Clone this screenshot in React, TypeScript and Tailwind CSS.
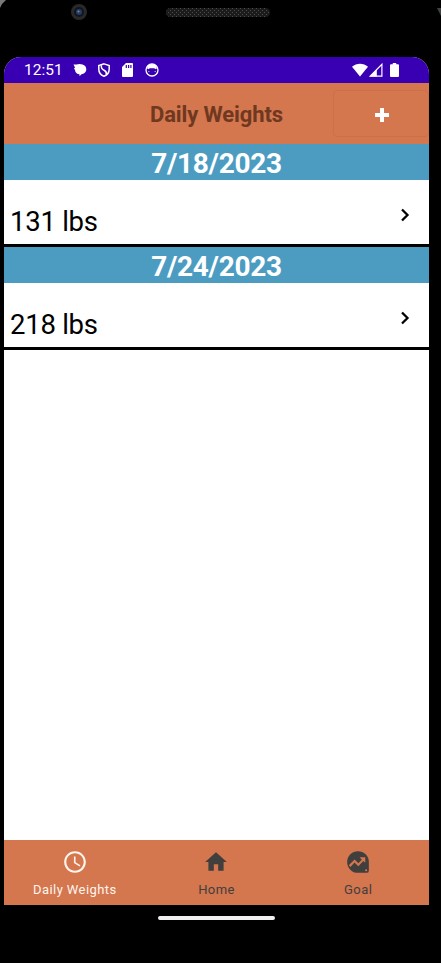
import React from "react";

const entries = [
  { date: "7/18/2023", weight: "131 lbs" },
  { date: "7/24/2023", weight: "218 lbs" },
];

function StatusBar() {
  return (
    <div className="flex h-[26px] shrink-0 items-center bg-[#3900b3] pl-5 pr-[30px] text-white">
      <span className="w-[49px] pt-[1px] text-[15.5px] leading-[25px]">12:51</span>
      <svg className="h-[14px] w-[14px]" viewBox="0 0 14 14" fill="currentColor">
        <path d="M.5 1.500H3.500C5 .8 8 .8 9.500 1.500 12 2.300 13.300 4 13.300 6.300 13.300 9 11 11 8.500 11.200L6.500 13.300V11.200C4 11.200 2.200 9.500 2 7L1 5.500 2 4.500Z" />
      </svg>
      <svg className="ml-[10px] h-[14px] w-[14px]" viewBox="0 0 14 14" fill="none" stroke="currentColor" strokeWidth="1.500">
        <path d="M7 .9 12.200 2.500V6C12.200 9.800 9.800 12.300 7 13.300 4.200 12.300 1.800 9.800 1.800 6V2.500Z" />
        <path d="M4.500 2.200C3.500 5.500 5.500 6.500 7.500 7.500 9.500 8.600 9.700 9.800 9.200 11.800" />
      </svg>
      <svg className="ml-[10px] h-[14px] w-[14px]" viewBox="0 0 14 14" fill="currentColor" fillRule="evenodd">
        <path d="M5 0H11A1 1 0 0 1 12 1V13A1 1 0 0 1 11 14H2A1 1 0 0 1 1 13V4ZM4.700 2V5H5.900V2ZM7 2V5H8.200V2ZM9.300 2V5H10.500V2Z" />
      </svg>
      <svg className="ml-[10px] h-[14px] w-[14px]" viewBox="0 0 14 14">
        <circle cx="7" cy="7" r="6" fill="none" stroke="currentColor" strokeWidth="1.300" />
        <path d="M1.500 7 3 2.200 5 1.200H9L11 2.200 12.500 7 11.300 5.300 10.500 6.200 9.300 5.200H4.700L3.500 6.200 2.700 5.300ZM3 8.500 4 7.800 4.500 9ZM11 8.500 10 7.800 9.500 9Z" fill="currentColor" />
      </svg>
      <div className="ml-auto flex items-center">
        <svg className="h-[14px] w-4" viewBox="0 0 16 14" fill="currentColor">
          <path d="M0 3.700C4.500-.2 11.500-.2 16 3.700L8 13.500Z" />
        </svg>
        <svg className="ml-[1px] h-[14px] w-[14px]" viewBox="0 0 14 14">
          <path d="M12.900 1.300V13.100H1.300Z" fill="none" stroke="currentColor" strokeWidth="1.200" />
          <path d="M7.800 6.200V13.500H1Z" fill="currentColor" />
        </svg>
        <svg className="ml-[7px] h-[14px] w-[9px]" viewBox="0 0 9 14" fill="currentColor">
          <path d="M2.800 0H6.200V1.300H8A1 1 0 0 1 9 2.300V13A1 1 0 0 1 8 14H1A1 1 0 0 1 0 13V2.300A1 1 0 0 1 1 1.300H2.800Z" />
        </svg>
      </div>
    </div>
  );
}

function Header() {
  return (
    <header className="grid h-[61px] shrink-0 grid-cols-[96px_1fr_96px] items-center bg-[#d4764e]">
      <h1 className="col-start-2 pt-[2px] text-center text-[22px] font-bold leading-7 tracking-[-0.12px] text-[#6f3820]">Daily Weights</h1>
      <button className="flex h-[47px] items-center justify-center rounded-[4px] border border-[#cb704a] pl-[1px] pt-[2px] text-white">
        <svg className="h-[14px] w-[14px]" viewBox="0 0 14 14" fill="currentColor">
          <path d="M5 0H9V5H14V9H9V14H5V9H0V5H5Z" />
        </svg>
      </button>
    </header>
  );
}

function Entry({ date, weight }: { date: string; weight: string }) {
  return (
    <section className="border-b-[3px] border-black">
      <h2 className="h-9 bg-[#4c9cc2] pt-[1px] text-center text-[28px] font-bold leading-[37px] tracking-[-0.3px] text-white">{date}</h2>
      <div className="flex h-16 items-start justify-between pl-[6px] pr-[19px]">
        <span className="pt-[24px] text-[27.500px] leading-9 tracking-[-0.25px] text-black">{weight}</span>
        <svg className="mt-[28px] h-[14px] w-[10px]" viewBox="0 0 10 14" fill="none" stroke="black" strokeWidth="2.300">
          <path d="M2 1.500 7.500 7 2 12.500" />
        </svg>
      </div>
    </section>
  );
}

function Tab({ label, active, children }: { label: string; active?: boolean; children: React.ReactNode }) {
  return (
    <div className={`flex flex-col items-center pt-[9px] ${active ? "text-[#fff5ed]" : "text-[#403f3e]"}`}>
      <svg className="h-[26px] w-[26px]" viewBox="0 0 24 24" fill="currentColor">{children}</svg>
      <span className="mt-[5px] text-[13px] leading-[19px] tracking-[0.42px]">{label}</span>
    </div>
  );
}

export default function App() {
  return (
    <div className="relative flex h-[963px] w-[441px] flex-col overflow-hidden bg-black pl-1 pr-3 font-[Roboto,sans-serif]">
      <svg className="absolute left-0 top-0 h-[57px] w-[441px]" viewBox="0 0 441 57">
        <defs>
          <pattern id="mesh" width="4" height="4" patternUnits="userSpaceOnUse">
            <rect width="4" height="4" fill="#1b1b1b" />
            <path d="M0 0H1V1H0ZM2 2H3V3H2Z" fill="#4c4c4c" />
          </pattern>
        </defs>
        <path d="M0 0H6Q2 3 0 8Z" fill="#77797a" />
        <path d="M437 8 441 16V8Z" fill="#404142" />
        <circle cx="79" cy="12" r="8" fill="#292929" />
        <circle cx="79" cy="12" r="5" fill="#10151f" />
        <circle cx="79" cy="12" r="3" fill="#273b60" />
        <circle cx="78.500" cy="11.500" r="1" fill="#7288b0" />
        <rect x="166" y="8" width="104" height="9" rx="4.500" fill="url(#mesh)" />
      </svg>
      <main className="mt-[57px] flex h-[848px] shrink-0 flex-col overflow-hidden rounded-t-[17px] bg-white">
        <StatusBar />
        <Header />
        {entries.map((entry) => <Entry key={entry.date} {...entry} />)}
        <nav className="mt-auto grid h-[65px] shrink-0 grid-cols-3 bg-[#d4764e]">
          <Tab label="Daily Weights" active>
            <path d="M11.990 2C6.470 2 2 6.480 2 12s4.470 10 9.990 10C17.520 22 22 17.520 22 12S17.520 2 11.990 2zM12 20c-4.420 0-8-3.580-8-8s3.580-8 8-8 8 3.580 8 8-3.580 8-8 8zM12.500 7H11v6l5.250 3.150.75-1.230-4.500-2.670z" />
          </Tab>
          <Tab label="Home">
            <path d="M10 20v-6h4v6h5v-8h3L12 3 2 12h3v8z" />
          </Tab>
          <Tab label="Goal">
            <path fillRule="evenodd" d="M12 2a10 10 0 1 0 0 20h8a2 2 0 0 0 2-2v-8A10 10 0 0 0 12 2ZM19.500 18.600a1 1 0 1 1 0 2 1 1 0 0 1 0-2ZM3.500 15 8.800 9.700l3.500 3.400 3.200-3.200L13.500 7.700H18.700v5l-1.800-1.600-4.600 4.800-3.500-3.500L5 16.500Z" />
          </Tab>
        </nav>
      </main>
      <div className="mx-auto mt-[11px] h-1 w-[117px] rounded-full bg-[#f2f0ef]" />
    </div>
  );
}
